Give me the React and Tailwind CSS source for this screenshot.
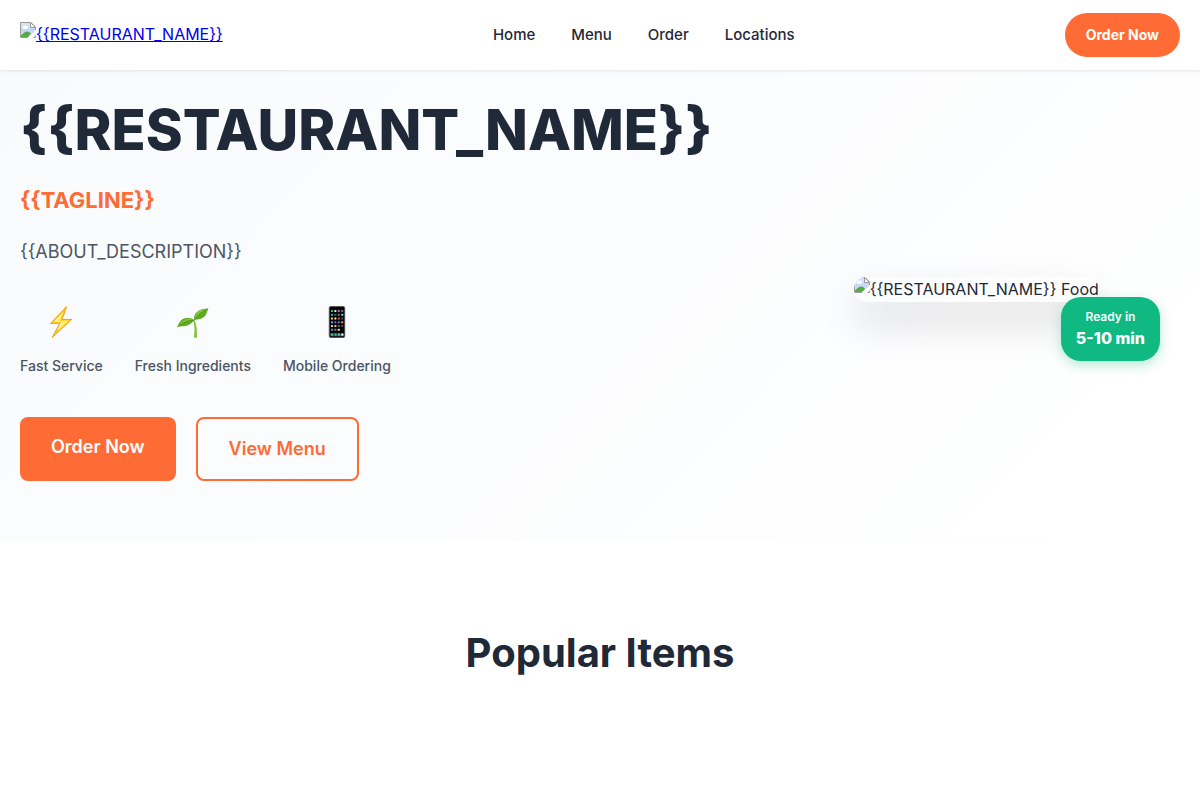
import React from "react";

function BrokenImageIcon({ className = "" }) {
  return (
    <svg className={`size-4 shrink-0 ${className}`} viewBox="0 0 16 16" aria-hidden="true">
      <path d="M0.5 0.5H11L15.5 5V9L9 15.5H0.5Z" fill="#c5d8f7" />
      <path d="M1 1h10v4h4v1H1z" fill="#d4e2fa" />
      <path d="M3 6.5a1.5 1.5 0 0 1 1.2-2.4A1.8 1.8 0 0 1 7.4 5 1.1 1.1 0 0 1 7.4 7H3.5z" fill="#fff" />
      <path d="M1 15v-1.5C3 12 4.500 9.500 7 9.500c2 0 3 1 4 2.300L8 15z" fill="#55ac3c" />
      <path d="M0.5 15.500V0.5H11L15.500 5V8" fill="none" stroke="#9b9b9b" />
      <path d="M0.5 15.500H8" stroke="#9b9b9b" />
      <path d="M10.500 0.5V5.500H15.500Z" fill="#fff" stroke="#9b9b9b" />
      <path d="M7.500 16L16 8V11L11 16Z" fill="#fff" />
      <path d="M13 16l3-3v3z" fill="#a5a5a5" />
    </svg>
  );
}

function BoltIcon() {
  return (
    <svg className="size-8" viewBox="0 0 32 32" aria-hidden="true">
      <path d="M21.600 0.5 5.500 17.400 14.800 17.200 7.200 31.500 26.700 13.300 17 13.600Z" fill="#ffc81e" stroke="#f7a01b" strokeWidth="1" strokeLinejoin="round" />
      <path d="M18.800 5.500 8.800 16.100 17 15.900 11.800 25.500 23.500 14.600 15 14.900Z" fill="#fff07a" />
      <path d="M17.500 7.500 10 15.700M17 16 13 23" stroke="#fff9cc" strokeWidth="1" />
    </svg>
  );
}

function SeedlingIcon() {
  return (
    <svg className="size-8" viewBox="0 0 32 32" aria-hidden="true">
      <path d="M17.300 14C19.500 18 20 24 19.800 31.300 19 32 17.800 32 17 31.300 18 24 17.500 18.500 16.500 14.500Z" fill="#72bd25" />
      <path d="M18.700 18C19.300 22 19.200 27 18.900 31" stroke="#9bda45" strokeWidth=".7" fill="none" />
      <path d="M0 21.500C3 12.500 9 9 17.500 14 14 18 11 20.200 6.500 20.300 3.500 20.400 2 20.500 0 21.500Z" fill="#61a922" />
      <path d="M1 20.500C5 17 10 13.500 17 14.200 12 10.500 5.500 12.500 1 20.500Z" fill="#7cc334" />
      <path d="M17.300 14C16 7 22 2.500 31.500 2.500 30 5 30 7.500 28 10 25.500 13 21 13.500 17.300 14Z" fill="#61a922" />
      <path d="M17.500 13C18 6.500 23 3 31 2.800 26 5 21.500 8 17.500 13Z" fill="#81c938" />
      <path d="M2 20C7 17 11 14.500 17 14.200 20 9 25 5.500 30.500 3" stroke="#438719" strokeWidth=".5" fill="none" />
    </svg>
  );
}

const PHONE_APPS = [
  ["#48c961", "#e8e8e8", "#b76ad2", "#777777"],
  ["#37b5e7", "#555555", "#777777", "#62d2e7"],
  ["#f1dc55", "#eeeeee", "#e05656", "#444444"],
  ["#3bc4d4", "#e43acd", "#2499f4", "#ff951f"],
  ["#dddddd", "#f3c348", "#666666", "#555555"],
  ["#29a8e5", "#ea5555", "#dddddd", "#080808"],
];
const PHONE_DOCK = ["#4dce55", "#32aef1", "#59cf68", "#e6e6e6"];

function PhoneIcon() {
  return (
    <svg className="size-8" viewBox="0 0 32 32" aria-hidden="true">
      <rect x="8.200" y="0.300" width="15.600" height="31.500" rx="1.800" fill="#060606" stroke="#62626a" strokeWidth=".7" />
      {PHONE_APPS.map((row, r) =>
        row.map((color, c) => (
          <rect key={`${r}-${c}`} x={10 + c * 3.4} y={4 + r * 3.75} width="2" height="1.900" rx=".5" fill={color} />
        ))
      )}
      <rect x="9" y="27" width="14" height="3.400" fill="#35383c" />
      {PHONE_DOCK.map((color, c) => (
        <rect key={c} x={10 + c * 3.4} y="27.500" width="2.200" height="2.200" rx=".5" fill={color} />
      ))}
    </svg>
  );
}

const NAV = ["Home", "Menu", "Order", "Locations"];
const FEATURES = [
  { label: "Fast Service", Icon: BoltIcon },
  { label: "Fresh Ingredients", Icon: SeedlingIcon },
  { label: "Mobile Ordering", Icon: PhoneIcon },
];

export default function App() {
  return (
    <div className="min-h-screen bg-white font-['Inter',sans-serif] text-base text-[#1f2937]">
      <header className="relative z-10 flex h-[70px] items-center justify-between bg-white px-5 shadow-[0_1px_3px_rgba(0,0,0,0.1)]">
        <a href="#home" className="flex items-start pb-[2px] text-[#0000ee]">
          <BrokenImageIcon />
          <span className="leading-6 underline">{"{{RESTAURANT_NAME}}"}</span>
        </a>
        <nav className="flex gap-9">
          {NAV.map((item) => (
            <a key={item} href={`#${item.toLowerCase()}`} className="text-[15px] leading-6 font-medium">
              {item}
            </a>
          ))}
        </nav>
        <a href="#order" className="rounded-full bg-[#ff6b35] px-[21px] py-[10px] text-sm leading-6 font-bold text-white">
          Order Now
        </a>
      </header>

      <main>
        <section id="home" className="bg-[linear-gradient(135deg,#f8fafc_0%,#ffffff_100%)] px-5 pt-7 pb-[60px]">
          <div className="grid grid-cols-[1fr_1fr] items-center gap-[60px]">
            <div>
              <h1 className="mb-5 text-[56px] leading-[64px] font-extrabold">{"{{RESTAURANT_NAME}}"}</h1>
              <p className="mb-5 text-[22px] leading-9 font-bold text-[#ff6b35]">{"{{TAGLINE}}"}</p>
              <p className="mb-10 text-lg leading-7 text-[#4b5563]">{"{{ABOUT_DESCRIPTION}}"}</p>
              <ul className="mb-10 flex gap-8">
                {FEATURES.map(({ label, Icon }) => (
                  <li key={label} className="flex flex-col items-center gap-[17px] text-sm leading-[22px] font-medium text-[#4b5563]">
                    <Icon />
                    <span>{label}</span>
                  </li>
                ))}
              </ul>
              <div className="flex gap-5">
                <a href="#order" className="rounded-lg bg-[#ff6b35] px-[31px] py-4 text-lg leading-7 font-semibold text-white">
                  Order Now
                </a>
                <a href="#menu" className="rounded-lg border-2 border-[#ff6b35] px-[31px] py-4 text-lg leading-7 font-semibold text-[#ff6b35]">
                  View Menu
                </a>
              </div>
            </div>
            <div className="relative flex justify-center">
              <div className="flex items-start overflow-hidden rounded-[20px] whitespace-nowrap shadow-[0_20px_40px_rgba(0,0,0,0.15)]">
                <BrokenImageIcon />
                <span className="leading-[25px]">{"{{RESTAURANT_NAME}} Food"}</span>
              </div>
              <div className="absolute top-5 right-5 rounded-[20px] bg-[#10b981] px-[15px] pt-[10px] pb-3 text-center text-white shadow-[0_4px_12px_rgba(16,185,129,0.3)]">
                <span className="block text-xs leading-5 font-semibold">Ready in</span>
                <span className="block text-base leading-[22px] font-extrabold">5-10 min</span>
              </div>
            </div>
          </div>
        </section>

        <section id="menu" className="px-5 py-20">
          <h2 className="text-center text-[40px] leading-[64px] font-bold">Popular Items</h2>
        </section>
      </main>
    </div>
  );
}
